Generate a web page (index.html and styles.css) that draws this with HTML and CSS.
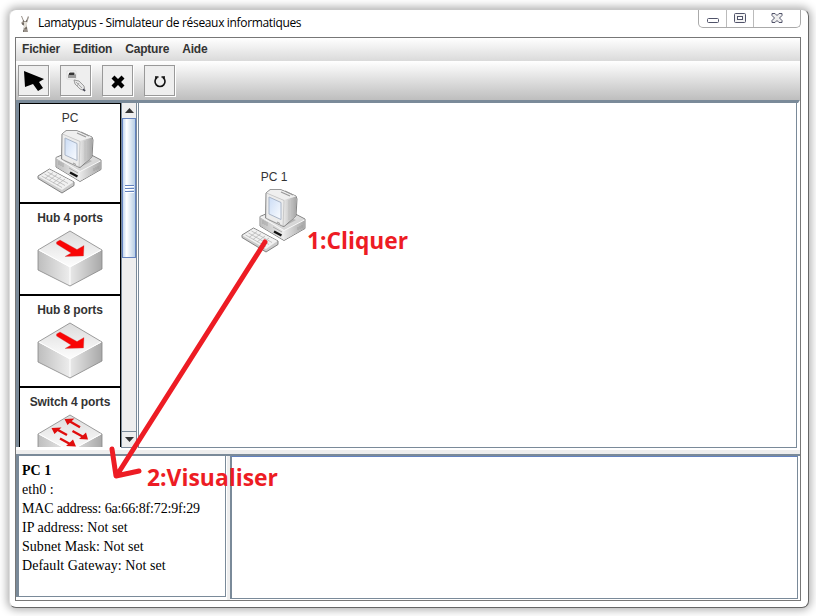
FILE: index.html
```html
<!DOCTYPE html>
<html lang="fr">
<head>
<meta charset="utf-8">
<title>Lamatypus - Simulateur de réseaux informatiques</title>
<link rel="stylesheet" href="styles.css">
</head>
<body>
<svg class="defs" width="0" height="0" aria-hidden="true">
  <defs>
    <linearGradient id="light" x1="0" y1="0" x2="1" y2="1"><stop offset="0" stop-color="#fafafa"/><stop offset="1" stop-color="#c9c9c9"/></linearGradient>
    <linearGradient id="left" x1="0" y1="0" x2="1" y2="0"><stop offset="0" stop-color="#bebebe"/><stop offset="1" stop-color="#ededed"/></linearGradient>
    <linearGradient id="right" x1="0" y1="0" x2="1" y2="0"><stop offset="0" stop-color="#e8e8e8"/><stop offset="1" stop-color="#a8a8a8"/></linearGradient>
    <linearGradient id="top" x1="0" y1="0" x2="0" y2="1"><stop offset="0" stop-color="#dcdcdc"/><stop offset="1" stop-color="#fdfdfd"/></linearGradient>
    <linearGradient id="screen" x1="0" y1="0" x2="1" y2="1"><stop offset="0" stop-color="#cbdcf5"/><stop offset="1" stop-color="#fafcff"/></linearGradient>
    <symbol id="pc" viewBox="0 0 66 64">
      <path d="M19 27.500L41 18l23 12v9.500L43 51.500 19 37z" fill="#ddd" stroke="#777" stroke-width=".9" stroke-linejoin="round"/>
      <path d="M19.500 28L43 41.500v9.500L19.500 37z" fill="url(#left)"/>
      <path d="M43 41.500L63.500 31v8.500L43 51z" fill="url(#right)"/>
      <path d="M19.500 28L41 19l22.500 12L43 41.500z" fill="url(#light)"/>
      <path d="M19.500 28L43 41.500 63.500 31" fill="none" stroke="#fff" stroke-width=".8"/>
      <path d="M27 31l15 7 13-7-12-5z" fill="#999" opacity=".6"/>
      <path d="M32 38l9 5" stroke="#aaa" stroke-width="1"/>
      <path d="M33 42.500l7.500 4" stroke="#111" stroke-width="2.400"/>
      <path d="M22 31v4m2-3v4m2-3v4M57 38v3m2-4v3m2-4v3" stroke="#999" stroke-width=".7"/>
      <path d="M25 4l4-3.300h11L55 7l1 3-1 17-12 10.500L24.500 29z" fill="#ddd" stroke="#777" stroke-width=".9" stroke-linejoin="round"/>
      <path d="M43 11l12-3.500V27L42.500 37z" fill="url(#right)"/>
      <path d="M25.500 4l4-3h10L55 7.300 43 11z" fill="#efefef"/>
      <path d="M40 3l9 4m-5-5l8 4" stroke="#999" stroke-width="1.200"/>
      <path d="M48 11v20m3-20v17" stroke="#bbb" stroke-width=".8"/>
      <path d="M25.500 4L43 11.500 42 37 25 29z" fill="#ececec" stroke="#aaa" stroke-width=".5"/>
      <path d="M28 8l12 5.500v17L28 25z" fill="url(#screen)" stroke="#a9b5c7" stroke-width="1"/>
      <path d="M36 33l3 1.500" stroke="#999"/>
      <path d="M12.500 39L37 52v3.500L25 63 1 48.500V46z" fill="#ccc" stroke="#777" stroke-width=".9" stroke-linejoin="round"/>
      <path d="M12.500 39.500L36.500 52 25 60 1.500 46.500z" fill="#f1f1f1"/>
      <path d="M4.500 46L25 57.500M7.500 44L28 55.500M10.500 42L31 53.500M8 48.500l8-6M12 50.500l8-6M16 53l8-6M20 55l8-6" stroke="#b8b8b8" stroke-width=".8"/>
    </symbol>
    <symbol id="box" viewBox="0 0 66 58">
      <path d="M1 20l32 17v19L1 40z" fill="url(#left)"/>
      <path d="M65 20L33 37v19l32-17z" fill="url(#right)"/>
      <path d="M33 1l32 19-32 17L1 20z" fill="url(#top)"/>
      <path d="M1 20L33 1l32 19v19L33 56 1 40z" fill="none" stroke="#858585" stroke-width=".8"/>
      <path d="M2 20l31 17 31-17M33 37v18" fill="none" stroke="#fff" stroke-width="1"/>
    </symbol>
    <symbol id="hub" viewBox="0 0 66 58">
      <use href="#box" width="66" height="58"/>
      <path d="M19.500 12l3.500-2 17 9.500 7-4-.5 10.500L28 26.500l6-3.500-14.500-9z" fill="#f90505" stroke="#b55" stroke-width=".3"/>
    </symbol>
    <symbol id="switch" viewBox="0 0 66 58">
      <use href="#box" width="66" height="58"/>
      <path d="M43 13.300L33 7.500M30 21l-10-5.500M35.500 17l10 5.500M23 24.500l10 5.500" stroke="#e00d0d" stroke-width="2.400"/>
      <path d="M27.500 5l10-.5-7 6.500zM14.500 14l10-.5-7 6.500zM51 25.500l-9-.5 7-6.500zM39 32.500l-10-.5 7-6.500z" fill="#e00d0d"/>
    </symbol>
  </defs>
</svg>

<main class="window">
  <header class="titlebar">
    <svg class="llama" width="12" height="18" viewBox="0 0 12 18">
      <path d="M3 1l2 5h2l2-5 1 1-2 6v4l1 5H4l1-6-3-3 2-2-2-5z" fill="#99928a"/>
      <path d="M5 7h3v3l-1 3H5z" fill="#e1ddd5"/><path d="M4 6h1m2 0h1M3 9h2M6 13h2M4 16h1" stroke="#4e4741"/>
    </svg>
    <span class="title">Lamatypus - Simulateur de réseaux informatiques</span>
    <div class="controls">
      <span class="ctl min"><svg width="14" height="12" viewBox="0 0 14 12"><rect x="1.500" y="5.500" width="11" height="4" rx="1" fill="#fff" stroke="#50536a"/></svg></span>
      <span class="ctl max"><svg width="14" height="12" viewBox="0 0 14 12"><rect x="1.500" y=".5" width="11" height="9" rx="1" fill="#f4f4f4" stroke="#50536a"/><rect x="4.500" y="3.500" width="5" height="3" fill="#fff" stroke="#50536a"/></svg></span>
      <span class="ctl close"><svg width="14" height="12" viewBox="0 0 14 12"><path d="M2 .5h3l2 2 2-2h3v2L9.500 5 12 7.500v2H9l-2-2-2 2H2v-2L4.500 5 2 2.500z" fill="#eee" stroke="#50536a" stroke-linejoin="round"/></svg></span>
    </div>
  </header>

  <section class="frame">
    <nav class="menubar"><span>Fichier</span><span>Edition</span><span>Capture</span><span>Aide</span></nav>
    <div class="toolbar">
      <button class="tool" aria-label="Sélection"><svg width="29" height="29" viewBox="0 0 29 29"><path d="M5 5l20 8-5 3 4 6-5 3-5-7-8 3z"/></svg></button>
      <button class="tool" aria-label="Câble"><svg width="29" height="29" viewBox="0 0 29 29"><path d="M6 5h9v8H6z" fill="#f7f7f7" stroke="#ddd"/><path d="M7 9l2-3h4l2 3v3H7z" fill="#999"/><path d="M8 7h5v2H8z" fill="#333"/><path d="M13 14l5 1 5 5 1 5-5-2-5-5z" fill="#e6e6e6" stroke="#888" stroke-width=".8"/><path d="M15 16l6 6m-3-5l-2 3" stroke="#aaa"/><path d="M22 23l2 2" stroke="#445" stroke-width="1.500"/></svg></button>
      <button class="tool" aria-label="Supprimer"><svg width="29" height="29" viewBox="0 0 29 29"><path d="M8.500 12.500l3-3 3.500 3.400 3.500-3.400 3 3-3.400 3.500 3.400 3.500-3 3-3.500-3.400-3.500 3.400-3-3 3.400-3.500z"/></svg></button>
      <button class="tool" aria-label="Actualiser"><svg width="29" height="29" viewBox="0 0 29 29"><path d="M10 11h3.500M12 11.500a5 5 0 1 0 6 0M16.500 11H20" fill="none" stroke="#111" stroke-width="1.600"/></svg></button>
    </div>

    <div class="workspace">
      <aside class="devices">
        <div class="device pc"><span>PC</span><svg width="66" height="64"><use href="#pc"/></svg></div>
        <div class="device"><span>Hub 4 ports</span><svg width="66" height="58"><use href="#hub"/></svg></div>
        <div class="device"><span>Hub 8 ports</span><svg width="66" height="58"><use href="#hub"/></svg></div>
        <div class="device"><span>Switch 4 ports</span><svg width="66" height="58"><use href="#switch"/></svg></div>
      </aside>
      <div class="scrollbar">
        <div class="arrow"><svg width="9" height="5" viewBox="0 0 9 5"><path d="M0 5l4.500-5L9 5z" fill="#333"/></svg></div>
        <div class="thumb"><i></i><i></i><i></i></div>
        <div class="track"></div>
        <div class="arrow down"><svg width="9" height="5" viewBox="0 0 9 5"><path d="M0 0l4.500 5L9 0z" fill="#333"/></svg></div>
      </div>
      <div class="canvas">
        <div class="node"><span>PC 1</span><svg width="66" height="64"><use href="#pc"/></svg></div>
      </div>
    </div>
    <div class="divider"></div>
    <div class="bottom">
      <div class="details"><strong>PC 1</strong><span>eth0 :</span><span class="mac">MAC address: 6a:66:8f:72:9f:29</span><span>IP address: Not set</span><span>Subnet Mask: Not set</span><span>Default Gateway: Not set</span></div>
      <div class="vdivider"></div>
      <div class="output"></div>
    </div>
  </section>
</main>

<svg class="notes" width="816" height="616" viewBox="0 0 816 616">
  <path d="M265 242L117 475M112 449l4 27 23-5" fill="none" stroke="#ed1c24" stroke-width="5" stroke-linecap="round" stroke-linejoin="round"/>
  <text x="307" y="249" textLength="101" lengthAdjust="spacingAndGlyphs">1:Cliquer</text>
  <text x="147" y="486" textLength="131" lengthAdjust="spacingAndGlyphs">2:Visualiser</text>
</svg>
</body>
</html>
```
FILE: styles.css
```css
* { box-sizing: border-box; }
body { margin: 0; width: 816px; height: 616px; padding: 9px 7px 8px 9px; overflow: hidden; background: #fff; font-family: "Liberation Sans", Arial, sans-serif; color: #333; }
.defs { position: absolute; }
svg { display: block; flex: none; }

.window { width: 800px; height: 599px; padding: 0 7px 0 5px; background: #fff; border: 1px solid #666; border-top-color: #c8c8c8; border-left-color: #ddd; border-radius: 7px; box-shadow: 0 0 9px 2px rgba(0,0,0,.32); }
.titlebar { display: flex; height: 27px; padding-left: 4px; }
.llama { margin-top: 5px; }
.title { margin: 4px 0 0 7px; width: 264px; font: 12px/18px "Open Sans", sans-serif; letter-spacing: -.34px; white-space: nowrap; color: #000; }
.controls { display: flex; margin-left: auto; width: 103px; height: 18px; border: 1px solid #aaa; border-top: 0; border-radius: 0 0 5px 5px; background: #fff; }
.ctl { display: flex; align-items: center; justify-content: center; width: 28px; border-right: 1px solid #bbb; }
.ctl.max { width: 27px; }
.ctl.close { flex: 1; border: 0; }

.frame { display: flex; flex-direction: column; width: 786px; height: 564px; border: 1px solid #777; background: #fff; }
.menubar { display: flex; gap: 13px; height: 23px; padding-left: 6px; background: linear-gradient(#fff, #dadada); font-weight: bold; font-size: 12px; line-height: 22px; }
.menubar span { letter-spacing: -.2px; }
.toolbar { display: flex; gap: 11px; height: 39px; padding: 4px 0 0 2px; background: linear-gradient(#fff, #bebebe); }
.tool { width: 31px; height: 31px; padding: 0; border: 1px solid #999; background: #eee; box-shadow: 1px 1px #fff; }

.workspace { display: flex; height: 350px; padding-bottom: 2px; border-top: 3px solid #7a8a99; border-right: 2px solid #fff; }
.devices { width: 105px; height: 344px; overflow: hidden; border-left: 3px solid #7a8a99; }
.device { display: flex; flex-direction: column; align-items: center; height: 92px; border: 1px solid #000; font-weight: bold; font-size: 12px; line-height: 14px; padding-top: 7px; white-space: nowrap; }
.device svg { margin-top: 5px; }
.device.pc { height: 100px; font-weight: normal; }
.device span { letter-spacing: -.1px; }
.scrollbar { display: flex; flex-direction: column; width: 16px; height: 345px; border-left: 1px solid #7a8a99; border-right: 1px solid #7a8a99; border-bottom: 1px solid #7a8a99; background: #eee; }
.arrow { display: flex; align-items: center; justify-content: center; height: 15px; background: #eee; }
.arrow.down { height: 16px; border-top: 1px solid #7a8a99; }
.thumb { display: flex; flex-direction: column; align-items: center; justify-content: center; gap: 2px; height: 140px; border: 1px solid #6382bf; background: linear-gradient(90deg, #c5d8ef, #fff 30%, #b8cfe5); }
.thumb i { width: 9px; height: 1px; background: #6382bf; box-shadow: 0 1px #fff; }
.track { flex: 1; }
.canvas { flex: 1; height: 345px; margin-left: 1px; margin-right: 1px; border: 1px solid #7a8a99; border-top: 0; background: #fff; }
.node { display: flex; flex-direction: column; align-items: center; position: relative; left: 102px; top: 67px; width: 66px; font-size: 12px; line-height: 14px; }
.node svg { margin-top: 5px; }

.divider { height: 4px; background: #eee; }
.bottom { display: flex; height: 146px; border-top: 2px solid #7a8a99; }
.details { display: flex; flex-direction: column; width: 210px; height: 141px; padding: 5px 0 0 3px; border: 1px solid #7a8a99; border-left-width: 3px; border-top: 0; font: 14px/19px "Liberation Serif", serif; letter-spacing: .04px; color: #000; white-space: nowrap; }
.details .mac { letter-spacing: -.16px; }
.vdivider { width: 3px; margin: 0 0 0 1px; background: #eee; }
.output { width: 568px; height: 143px; border: 1px solid #7a8a99; border-top-color: #6382bf; border-left: 2px solid #7a8a99; }

.notes { position: absolute; left: 0; top: 0; pointer-events: none; }
.notes text { font: bold 24px "Open Sans", sans-serif; fill: #ed1c24; }
```
